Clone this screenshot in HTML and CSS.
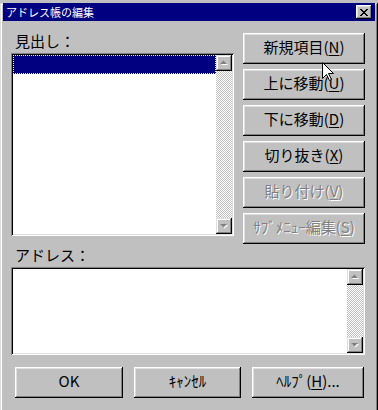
FILE: index.html
```html
<!DOCTYPE html>
<html lang="ja">
<head>
    <meta charset="UTF-8">
    <title>アドレス帳の編集</title>
    <link rel="stylesheet" href="styles.css">
</head>
<body>
    <div class="dialog">
        <div class="titlebar">
            <span class="title">アドレス帳の編集</span>
            <button class="close-btn">
                <svg width="8" height="7" viewBox="0 0 8 7">
                    <path d="M0 0h2v1h1v1h2V1h1V0h2v1H7v1H6v1H5v1h1v1h1v1h1v1H6V6H5V5H3v1H2v1H0V6h1V5h1V4h1V3H2V2H1V1H0z" fill="#000"/>
                </svg>
            </button>
        </div>

        <div class="main">
            <div class="left-col">
                <div class="label">見出し：</div>
                <div class="field listbox">
                    <div class="list-area">
                        <div class="list-item selected"></div>
                    </div>
                    <div class="scrollbar">
                        <div class="scroll-btn">
                            <svg width="16" height="16" viewBox="0 0 16 16">
                                <path d="M5 10h7L8.5 6.5z" fill="#fff"/>
                                <path d="M4 9h7L7.5 5.5z" fill="#808080"/>
                            </svg>
                        </div>
                        <div class="scroll-track"></div>
                        <div class="scroll-btn">
                            <svg width="16" height="16" viewBox="0 0 16 16">
                                <path d="M5 7h7L8.5 10.5z" fill="#fff"/>
                                <path d="M4 6h7L7.5 9.5z" fill="#808080"/>
                            </svg>
                        </div>
                    </div>
                </div>
            </div>

            <div class="right-col">
                <button class="btn">新規項目(<u>N</u>)</button>
                <button class="btn">上に移動(<u>U</u>)</button>
                <button class="btn">下に移動(<u>D</u>)</button>
                <button class="btn">切り抜き(<u>X</u>)</button>
                <button class="btn disabled">貼り付け(<u>V</u>)</button>
                <button class="btn disabled">ｻﾌﾞﾒﾆｭｰ編集(<u>S</u>)</button>
            </div>
        </div>

        <div class="label address-label">アドレス：</div>
        <div class="field address-box">
            <div class="list-area"></div>
            <div class="scrollbar">
                <div class="scroll-btn">
                    <svg width="16" height="16" viewBox="0 0 16 16">
                        <path d="M5 10h7L8.5 6.5z" fill="#fff"/>
                        <path d="M4 9h7L7.5 5.5z" fill="#808080"/>
                    </svg>
                </div>
                <div class="scroll-track"></div>
                <div class="scroll-btn">
                    <svg width="16" height="16" viewBox="0 0 16 16">
                        <path d="M5 7h7L8.5 10.5z" fill="#fff"/>
                        <path d="M4 6h7L7.5 9.5z" fill="#808080"/>
                    </svg>
                </div>
            </div>
        </div>

        <div class="footer">
            <button class="btn btn-ok">OK</button>
            <button class="btn btn-cancel">ｷｬﾝｾﾙ</button>
            <button class="btn btn-help">ﾍﾙﾌﾟ(<u>H</u>)...</button>
        </div>

        <!-- mouse pointer over the first button -->
        <svg class="cursor" width="13" height="20" viewBox="0 0 13 20">
            <path d="M0.5 0.5V16.5L4.5 12.5L7.5 18.5L9.5 17.5L6.5 11.5H11.5Z" fill="#fff" stroke="#000" stroke-width="1"/>
        </svg>
    </div>
</body>
</html>
```

FILE: styles.css
```css
* {
    box-sizing: border-box;
    margin: 0;
    padding: 0;
}

body {
    background: #c0c0c0;
    font-family: "Noto Sans CJK JP", "Liberation Sans", sans-serif;
    color: #000;
}

.dialog {
    position: relative;
    width: 378px;
    height: 410px;
    background: #c0c0c0;
    box-shadow: inset -1px -1px #000, inset 1px 1px #dfdfdf,
                inset -2px -2px #808080, inset 2px 2px #fff;
}

.titlebar {
    display: flex;
    align-items: center;
    justify-content: space-between;
    height: 18px;
    margin: 3px 3px 0 3px;
    padding: 0 3px 0 3px;
    background: #000080;
}

.title {
    color: #fff;
    font-size: 11px;
    line-height: 18px;
}

.close-btn {
    display: flex;
    align-items: center;
    justify-content: center;
    width: 16px;
    height: 14px;
    border: none;
    background: #c0c0c0;
    box-shadow: inset -1px -1px #000, inset 1px 1px #fff,
                inset -2px -2px #808080, inset 2px 2px #dfdfdf;
}

.main {
    display: grid;
    grid-template-columns: 223px 122px;
    column-gap: 9px;
    margin-top: 12px;
    padding-left: 11px;
}

.label {
    font-size: 15px;
    line-height: 16px;
    height: 20px;
    padding-left: 4px;
}

/* sunken fields */
.field {
    display: flex;
    padding: 2px;
    background: #fff;
    box-shadow: inset 1px 1px #808080, inset -1px -1px #fff,
                inset 2px 2px #000, inset -2px -2px #dfdfdf;
}

.listbox {
    width: 223px;
    height: 183px;
}

.list-area {
    flex: 1;
    background: #fff;
}

.list-item {
    height: 19px;
}

.list-item.selected {
    background: #000080;
    border: 1px dotted #ffff80;
}

.scrollbar {
    display: flex;
    flex-direction: column;
    width: 16px;
}

.scroll-track {
    flex: 1;
    background: repeating-conic-gradient(#c0c0c0 0 25%, #fff 0 50%) 0 0 / 2px 2px;
}

.scroll-btn {
    width: 16px;
    height: 16px;
    background: #c0c0c0;
    box-shadow: inset -1px -1px #000, inset 1px 1px #dfdfdf,
                inset -2px -2px #808080, inset 2px 2px #fff;
}

.scroll-btn svg {
    display: block;
}

.right-col {
    display: flex;
    flex-direction: column;
    gap: 5px;
}

.btn {
    height: 31px;
    border: none;
    background: #c0c0c0;
    font-family: "Noto Sans CJK JP", "Liberation Sans", sans-serif;
    font-size: 15px;
    line-height: 18px;
    padding-bottom: 3px;
    color: #000;
    box-shadow: inset -1px -1px #000, inset 1px 1px #fff,
                inset -2px -2px #808080, inset 2px 2px #dfdfdf;
}

.btn u {
    text-underline-offset: 2px;
}

.btn.disabled {
    color: #808080;
    text-shadow: 1px 1px 0 #fff;
}

.address-label {
    padding-top: 2px;
    padding-left: 15px;
    height: 23px;
    line-height: 18px;
}

.address-box {
    width: 354px;
    height: 88px;
    margin-left: 11px;
}

.footer {
    display: flex;
    gap: 11px;
    margin-top: 12px;
    padding-left: 15px;
}

.btn-ok {
    width: 108px;
}

.btn-cancel {
    width: 107px;
}

.btn-help {
    width: 112px;
}

.cursor {
    position: absolute;
    left: 322px;
    top: 59px;
}
```
